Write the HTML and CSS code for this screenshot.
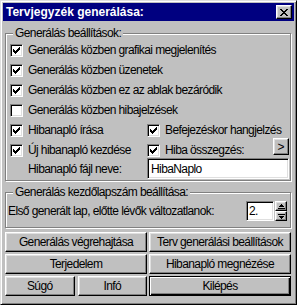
FILE: index.html
```html
<!DOCTYPE html>
<html lang="hu">
<head>
<meta charset="utf-8">
<title>Tervjegyzék generálása</title>
<link rel="stylesheet" href="styles.css">
</head>
<body>
<div class="window">
  <div class="titlebar">
    <span class="title">Tervjegyzék generálása:</span>
    <div class="close btn"><svg width="8" height="7" viewBox="0 0 8 7" shape-rendering="crispEdges"><path d="M0 0h2v1h-2z M6 0h2v1h-2z M1 1h2v1h-2z M5 1h2v1h-2z M2 2h4v1h-4z M3 3h2v1h-2z M2 4h4v1h-4z M1 5h2v1h-2z M5 5h2v1h-2z M0 6h2v1h-2z M6 6h2v1h-2z" fill="#000"/></svg></div>
  </div>
  <div class="content">
    <fieldset class="group g1">
      <legend>Generálás beállítások:</legend>
      <div class="chk"><span class="box on"></span><span>Generálás közben grafikai megjelenítés</span></div>
      <div class="chk"><span class="box on"></span><span>Generálás közben üzenetek</span></div>
      <div class="chk"><span class="box on"></span><span>Generálás közben ez az ablak bezáródik</span></div>
      <div class="chk"><span class="box"></span><span>Generálás közben hibajelzések</span></div>
      <div class="pair">
        <div class="chk"><span class="box on"></span><span>Hibanapló írása</span></div>
        <div class="chk"><span class="box on"></span><span>Befejezéskor hangjelzés</span></div>
      </div>
      <div class="pair">
        <div class="chk"><span class="box on"></span><span>Új hibanapló kezdése</span></div>
        <div class="chk"><span class="box on"></span><span>Hiba összegzés:</span><div class="btn more">&gt;</div></div>
      </div>
      <div class="filerow">
        <span class="filelabel">Hibanapló fájl neve:</span>
        <div class="field">HibaNaplo</div>
      </div>
    </fieldset>
    <fieldset class="group g2">
      <legend>Generálás kezdőlapszám beállítása:</legend>
      <div class="startrow">
        <span>Első generált lap, előtte lévők változatlanok:</span>
        <div class="spin">
          <div class="field num">2.</div>
          <div class="spinbtns">
            <div class="btn arrow"><svg width="7" height="5" viewBox="0 0 7 5" shape-rendering="crispEdges"><path d="M3 0h1v1h-1z M2 1h3v1h-3z M1 2h5v1h-5z M0 4h7v1h-7z" fill="#000"/></svg></div>
            <div class="btn arrow"><svg width="7" height="5" viewBox="0 0 7 5" shape-rendering="crispEdges"><path d="M0 0h7v1h-7z M1 2h5v1h-5z M2 3h3v1h-3z M3 4h1v1h-1z" fill="#000"/></svg></div>
          </div>
        </div>
      </div>
    </fieldset>
    <div class="buttons">
      <div class="btn">Generálás végrehajtása</div>
      <div class="btn">Terv generálási beállítások</div>
      <div class="btn">Terjedelem</div>
      <div class="btn">Hibanapló megnézése</div>
      <div class="split">
        <div class="btn">Súgó</div>
        <div class="btn">Infó</div>
      </div>
      <div class="btn default">Kilépés</div>
    </div>
  </div>
</div>
</body>
</html>
```
FILE: styles.css
```css
* { box-sizing: border-box; }
html, body { margin: 0; padding: 0; }
body {
  width: 297px;
  height: 305px;
  overflow: hidden;
  background: #c0c0c0;
  color: #000;
  font-family: "Liberation Sans", Arial, sans-serif;
  font-size: 12px;
  letter-spacing: -0.6px;
}
.window {
  width: 297px;
  height: 305px;
  border: 1px solid;
  border-color: #dfdfdf #000 #000 #dfdfdf;
  box-shadow: inset 1px 1px #fff, inset -1px -1px #808080;
  padding: 2px;
  display: flex;
  flex-direction: column;
}
.titlebar {
  height: 18px;
  background: #000080;
  display: flex;
  align-items: center;
  padding-left: 3px;
}
.title {
  color: #fff;
  font-weight: bold;
  font-size: 12px;
  letter-spacing: 0;
}
.btn {
  background: #c0c0c0;
  border: 1px solid;
  border-color: #fff #000 #000 #fff;
  box-shadow: inset -1px -1px #808080, inset 1px 1px #dfdfdf;
  display: flex;
  align-items: center;
  justify-content: center;
  white-space: nowrap;
}
.close {
  margin-left: auto;
  margin-right: 2px;
  width: 16px;
  height: 14px;
}
.content {
  flex: 1;
  display: flex;
  flex-direction: column;
  padding: 0 3px 0 2px;
}
.group {
  margin: 0;
  border: 1px solid #808080;
  box-shadow: inset 1px 1px #fff, 1px 1px #fff;
  min-width: 0;
}
.group legend {
  line-height: 14px;
  padding: 0 2px;
  background: #c0c0c0;
}
.g1 {
  margin-top: 5px;
  padding: 0 1px 1px 4px;
}
.g1 legend { margin-left: 3px; }
.g2 {
  margin-top: 4px;
  padding: 0 2px 6px 2px;
}
.g2 legend { margin-left: 5px; }
.chk {
  height: 20px;
  display: flex;
  align-items: center;
  gap: 5px;
  white-space: nowrap;
}
.box {
  flex: none;
  width: 13px;
  height: 13px;
  background: #fff;
  border: 1px solid;
  border-color: #808080 #fff #fff #808080;
  box-shadow: inset 1px 1px #000, inset -1px -1px #dfdfdf;
  display: flex;
  align-items: center;
  justify-content: center;
}
.box.on::before {
  content: "";
  width: 7px;
  height: 7px;
  background: url("data:image/svg+xml;utf8,<svg xmlns='http://www.w3.org/2000/svg' width='7' height='7' viewBox='0 0 7 7' shape-rendering='crispEdges'><path d='M0 2h1v3h-1z M1 3h1v3h-1z M2 4h1v3h-1z M3 3h1v3h-1z M4 2h1v3h-1z M5 1h1v3h-1z M6 0h1v3h-1z' fill='black'/></svg>") no-repeat;
}
.pair {
  display: grid;
  grid-template-columns: 137px 1fr;
}
.more {
  margin-left: auto;
  width: 16px;
  height: 17px;
  align-self: flex-start;
  margin-top: -2px;
  font-size: 12px;
  letter-spacing: 0;
}
.filerow {
  display: grid;
  grid-template-columns: 137px 1fr;
  align-items: center;
  margin-top: -2px;
}
.filelabel { padding-left: 18px; }
.field {
  height: 21px;
  background: #fff;
  border: 1px solid;
  border-color: #808080 #fff #fff #808080;
  box-shadow: inset 1px 1px #000, inset -1px -1px #dfdfdf;
  padding: 0 3px;
  display: flex;
  align-items: center;
}
.startrow {
  margin-top: 2px;
  height: 20px;
  display: flex;
  align-items: center;
  justify-content: space-between;
  white-space: nowrap;
}
.spin {
  display: flex;
  gap: 1px;
  margin-right: 1px;
}
.field.num {
  width: 28px;
  height: 20px;
  padding: 0 2px;
}
.spinbtns {
  display: flex;
  flex-direction: column;
}
.arrow {
  width: 12px;
  height: 10px;
}
.buttons {
  margin-top: 4px;
  display: grid;
  grid-template-columns: 1fr 1fr;
  grid-auto-rows: 20px;
  gap: 2px;
}
.split {
  display: grid;
  grid-template-columns: 1fr 1fr;
  gap: 3px;
}
.default {
  border-color: #000;
  box-shadow: inset 1px 1px #fff, inset -1px -1px #000, inset -2px -2px #808080;
}
```
